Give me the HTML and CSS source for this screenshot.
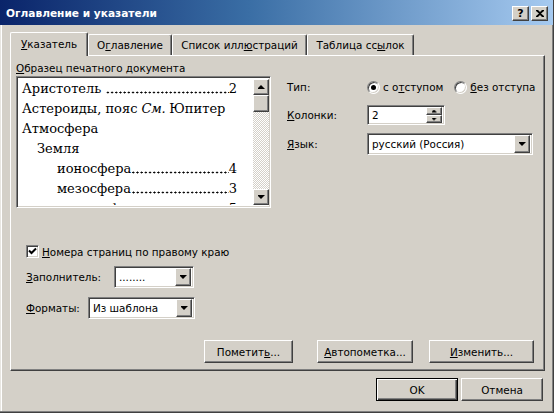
FILE: index.html
```html
<!DOCTYPE html>
<html lang="ru">
<head>
<meta charset="utf-8">
<title>Оглавление и указатели</title>
<link rel="stylesheet" href="styles.css">
</head>
<body>
<div class="window">
  <div class="titlebar">
    <span class="title">Оглавление и указатели</span>
    <div class="caption-btns">
      <span class="cbtn help">?</span>
      <span class="cbtn close"><svg width="8" height="7" viewBox="0 0 8 7"><path d="M0 0h2l2 2 2-2h2v1L5 3.5 8 6v1H6L4 5 2 7H0V6l3-2.5L0 1z" fill="#000"/></svg></span>
    </div>
  </div>
  <div class="client">
    <div class="tabs">
      <div class="tab active t1"><span><u>У</u>казатель</span></div>
      <div class="tab t2"><span>О<u>г</u>лавление</span></div>
      <div class="tab t3"><span>Список илл<u>ю</u>страций</span></div>
      <div class="tab t4"><span>Таблица сс<u>ы</u>лок</span></div>
    </div>
    <div class="panel">
      <div class="top">
        <div class="sample">
          <div class="label"><u>О</u>бразец печатного документа</div>
          <div class="preview sunken">
            <div class="pv-text">
              <div class="pv-line"><span class="nm">Аристотель&nbsp;</span><span class="dots"></span><span class="pg">2</span></div>
              <div class="pv-line"><span class="nm">Астероиды, пояс <i>См.</i> Юпитер</span></div>
              <div class="pv-line"><span class="nm">Атмосфера</span></div>
              <div class="pv-line ind1"><span class="nm">Земля</span></div>
              <div class="pv-line ind2"><span class="nm">ионосфера</span><span class="dots"></span><span class="pg">4</span></div>
              <div class="pv-line ind2"><span class="nm">мезосфера</span><span class="dots"></span><span class="pg">3</span></div>
              <div class="pv-line ind2 last"><span class="nm">стратосфера</span><span class="dots"></span><span class="pg">5</span></div>
            </div>
            <div class="vscroll">
              <div class="sbtn"><span class="tri-up"></span></div>
              <div class="thumb"></div>
              <div class="track"></div>
              <div class="sbtn"><span class="tri-down"></span></div>
            </div>
          </div>
        </div>
        <div class="opts">
          <span class="olabel">Тип:</span>
          <div class="radios">
            <label class="radio r1"><span class="rdot checked"></span><span>с о<u>т</u>ступом</span></label>
            <label class="radio r2"><span class="rdot"></span><span><u>б</u>ез отступа</span></label>
          </div>
          <span class="olabel"><u>К</u>олонки:</span>
          <div class="spin sunken">
            <span class="val">2</span>
            <div class="spinbtns">
              <span class="sb"><span class="tri-sup"></span></span>
              <span class="sb"><span class="tri-sdown"></span></span>
            </div>
          </div>
          <span class="olabel"><u>Я</u>зык:</span>
          <div class="combo sunken lang"><span class="val">русский (Россия)</span><span class="dd"><span class="tri-down"></span></span></div>
        </div>
      </div>
      <div class="lower">
        <label class="check">
          <span class="cbox"><svg width="9" height="9" viewBox="0 0 9 9"><path d="M1 3.5 3.5 6 8 1.5" fill="none" stroke="#000" stroke-width="2"/></svg></span>
          <span><u>Н</u>омера страниц по правому краю</span>
        </label>
        <div class="frow">
          <span class="flabel fill-l"><u>З</u>аполнитель:</span>
          <div class="combo sunken fill-c"><span class="val">........</span><span class="dd"><span class="tri-down"></span></span></div>
        </div>
        <div class="frow frow2">
          <span class="flabel fmt-l"><u>Ф</u>орматы:</span>
          <div class="combo sunken fmt-c"><span class="val">Из шаблона</span><span class="dd"><span class="tri-down"></span></span></div>
        </div>
      </div>
      <div class="actions">
        <button class="btn b-mark">Пометит<u>ь</u>...</button>
        <button class="btn b-auto"><u>А</u>втопометка...</button>
        <button class="btn b-edit"><u>И</u>зменить...</button>
      </div>
    </div>
    <div class="footer">
      <button class="btn default b-ok">OK</button>
      <button class="btn b-cancel">Отмена</button>
    </div>
  </div>
</div>
</body>
</html>
```
FILE: styles.css
```css
* { box-sizing: border-box; }
html, body { margin: 0; padding: 0; }
body {
  width: 554px; height: 413px; overflow: hidden;
  background: #d4d0c8;
  font-family: "DejaVu Sans", sans-serif;
  font-size: 10.4px; color: #000;
}
u { text-decoration: underline; text-underline-offset: 1px; }

.window {
  width: 554px; height: 413px;
  display: flex; flex-direction: column;
  background: #d4d0c8;
  border-right: 1px solid #404040;
  border-bottom: 1px solid #404040;
  box-shadow: inset -1px -1px #808080, inset 1px 0 #e8e6e1, inset 2px 0 #fff;
}

/* title bar */
.titlebar {
  height: 25px; flex: none;
  display: flex; align-items: center; justify-content: space-between;
  padding: 0 5px 0 6px;
  background: linear-gradient(to right, #0a246a, #3a6ea5 45%, #a6caf0);
}
.title { color: #fff; font-weight: bold; font-size: 10.6px; }
.caption-btns { display: flex; gap: 2px; margin-top: 1px; }
.cbtn {
  width: 17px; height: 15px;
  display: flex; align-items: center; justify-content: center;
  background: #d4d0c8;
  border: 1px solid; border-color: #fff #404040 #404040 #fff;
  box-shadow: inset -1px -1px #808080;
  font-weight: bold; font-size: 11px; line-height: 1;
}

/* client */
.client { flex: 1; display: flex; flex-direction: column; padding: 7px 9px 0 10px; }

.tabs { display: flex; align-items: flex-end; height: 23px; position: relative; z-index: 1; }
.tab {
  height: 21px;
  display: flex; align-items: center; justify-content: center;
  border-top: 1px solid #fff; border-left: 1px solid #fff;
  border-right: 1px solid #404040;
  box-shadow: inset -1px 0 #808080;
  border-radius: 2px 2px 0 0;
  background: #d4d0c8;
}
.tab.active { height: 24px; margin-bottom: -1px; padding-bottom: 2px; }
.t1 { width: 78px; }
.t2 { width: 84px; }
.t3 { width: 135px; }
.t4 { width: 107px; }

.panel {
  width: 535px; height: 316px;
  display: flex; flex-direction: column;
  border: 1px solid; border-color: #fff #404040 #404040 #fff;
  box-shadow: inset -1px -1px #808080;
}

.sunken {
  background: #fff;
  border: 1px solid; border-color: #808080 #fff #fff #808080;
  box-shadow: inset 1px 1px #404040, inset -1px -1px #d4d0c8;
}

.top { display: flex; margin-top: 6px; }
.sample { margin-left: 5px; }
.label { height: 14px; line-height: 13px; }
.preview {
  width: 255px; height: 132px;
  display: flex; padding: 2px 1px 2px 2px;
}
.pv-text {
  flex: 1; overflow: hidden;
  font-family: "DejaVu Serif", serif; font-size: 13px; line-height: 20px;
  padding: 0 16px 0 3px;
}
.pv-line { display: flex; white-space: nowrap; height: 20px; flex: none; }
.pv-line .nm { flex: none; }
.pv-line .dots {
  flex: 1;
  background: radial-gradient(circle, #000 0.8px, transparent 1.2px) right 1px bottom 5px / 4.2px 3px repeat-x;
}
.pv-line .pg { flex: none; }
.pv-line i { letter-spacing: -0.4px; }
.ind1 { padding-left: 15px; }
.ind2 { padding-left: 35px; }

.vscroll { width: 16px; display: flex; flex-direction: column; flex: none; }
.sbtn, .thumb, .sb, .dd, .btn {
  background: #d4d0c8;
  border: 1px solid; border-color: #fff #404040 #404040 #fff;
  box-shadow: inset -1px -1px #808080;
}
.sbtn { height: 16px; flex: none; display: flex; align-items: center; justify-content: center; }
.thumb { height: 17px; flex: none; }
.track { flex: 1; background: repeating-conic-gradient(#fff 0 25%, #d4d0c8 0 50%) 0 0 / 2px 2px; }

.tri-down, .tri-up { width: 7px; height: 4px; background: #000; display: block; }
.tri-down { clip-path: polygon(0 0, 7px 0, 7px 1px, 6px 1px, 6px 2px, 5px 2px, 5px 3px, 4px 3px, 4px 4px, 3px 4px, 3px 3px, 2px 3px, 2px 2px, 1px 2px, 1px 1px, 0 1px); }
.tri-up { clip-path: polygon(3px 0, 4px 0, 4px 1px, 5px 1px, 5px 2px, 6px 2px, 6px 3px, 7px 3px, 7px 4px, 0 4px, 0 3px, 1px 3px, 1px 2px, 2px 2px, 2px 1px, 3px 1px); }
.tri-sup, .tri-sdown { width: 5px; height: 3px; background: #000; display: block; }
.tri-sdown { clip-path: polygon(0 0, 5px 0, 5px 1px, 4px 1px, 4px 2px, 3px 2px, 3px 3px, 2px 3px, 2px 2px, 1px 2px, 1px 1px, 0 1px); }
.tri-sup { clip-path: polygon(2px 0, 3px 0, 3px 1px, 4px 1px, 4px 2px, 5px 2px, 5px 3px, 0 3px, 0 2px, 1px 2px, 1px 1px, 2px 1px); }

/* options */
.opts {
  margin-left: 16px; margin-top: 15px;
  display: grid; grid-template-columns: 80px auto;
  grid-template-rows: 20px 20px 22px; row-gap: 8px;
  align-items: center; align-content: start;
}
.radios { display: flex; align-items: center; }
.radio { display: flex; align-items: center; gap: 3px; }
.r2 { margin-left: 11px; }
.rdot {
  width: 13px; height: 13px; border-radius: 50%;
  background: #fff; position: relative;
  border: 1px solid; border-color: #808080 #fff #fff #808080;
  box-shadow: inset 1px 1px #404040, inset -1px -1px #d4d0c8;
}
.rdot.checked::after {
  content: ""; position: absolute; left: 3px; top: 3px;
  width: 5px; height: 5px; border-radius: 50%; background: #000;
}

.spin { width: 78px; height: 20px; display: flex; align-items: center; padding: 2px; }
.spin .val, .combo .val { flex: 1; padding-left: 2px; }
.spinbtns { width: 16px; height: 16px; display: flex; flex-direction: column; }
.sb { flex: 1; display: flex; align-items: center; justify-content: center; }

.combo { height: 22px; display: flex; align-items: center; padding: 2px; }
.lang { width: 166px; }
.dd { width: 16px; height: 18px; flex: none; display: flex; align-items: center; justify-content: center; }

/* lower */
.lower { margin-left: 15px; display: flex; flex-direction: column; }
.check { display: flex; align-items: center; gap: 3px; margin-top: 37px; height: 13px; }
.cbox {
  width: 13px; height: 13px; display: flex; align-items: center; justify-content: center;
  background: #fff;
  border: 1px solid; border-color: #808080 #fff #fff #808080;
  box-shadow: inset 1px 1px #404040, inset -1px -1px #d4d0c8;
}
.frow { display: flex; align-items: center; margin-top: 8px; }
.frow2 { margin-top: 9px; }
.fill-l { width: 88px; }
.fill-c { width: 80px; }
.fmt-l { width: 62px; }
.fmt-c { width: 107px; }

/* buttons */
.btn {
  font-family: inherit; font-size: 10.4px; color: #000;
  height: 23px; padding: 0; margin: 0;
  display: flex; align-items: center; justify-content: center;
}
.actions { margin-top: auto; margin-bottom: 7px; display: flex; justify-content: flex-end; padding-right: 10px; }
.b-mark { width: 89px; }
.b-auto { width: 96px; margin-left: 24px; }
.b-edit { width: 105px; margin-left: 16px; }

.footer { display: flex; justify-content: flex-end; gap: 3px; margin-top: 7px; padding-right: 1px; }
.b-ok { width: 82px; }
.b-cancel { width: 82px; }
.btn.default {
  border-color: #000;
  box-shadow: inset 1px 1px #fff, inset -1px -1px #404040, inset -2px -2px #808080;
}
```
